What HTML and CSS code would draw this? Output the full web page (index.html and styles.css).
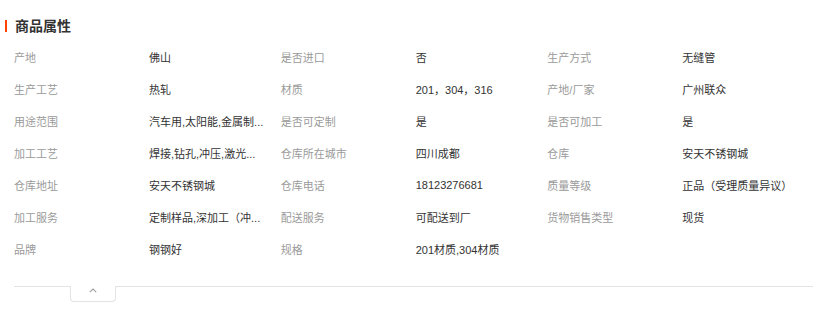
FILE: index.html
```html
<!DOCTYPE html>
<html lang="zh-CN">
<head>
<meta charset="utf-8">
<title>商品属性</title>
<link rel="stylesheet" href="styles.css">
</head>
<body>
<section class="attrs">
  <h3 class="attrs-title">商品属性</h3>
  <div class="attrs-grid">
    <div class="attr"><span class="attr-label">产地</span><span class="attr-value">佛山</span></div>
    <div class="attr"><span class="attr-label">是否进口</span><span class="attr-value">否</span></div>
    <div class="attr"><span class="attr-label">生产方式</span><span class="attr-value">无缝管</span></div>
    <div class="attr"><span class="attr-label">生产工艺</span><span class="attr-value">热轧</span></div>
    <div class="attr"><span class="attr-label">材质</span><span class="attr-value">201，304，316</span></div>
    <div class="attr"><span class="attr-label">产地/厂家</span><span class="attr-value">广州联众</span></div>
    <div class="attr"><span class="attr-label">用途范围</span><span class="attr-value">汽车用,太阳能,金属制...</span></div>
    <div class="attr"><span class="attr-label">是否可定制</span><span class="attr-value">是</span></div>
    <div class="attr"><span class="attr-label">是否可加工</span><span class="attr-value">是</span></div>
    <div class="attr"><span class="attr-label">加工工艺</span><span class="attr-value">焊接,钻孔,冲压,激光...</span></div>
    <div class="attr"><span class="attr-label">仓库所在城市</span><span class="attr-value">四川成都</span></div>
    <div class="attr"><span class="attr-label">仓库</span><span class="attr-value">安天不锈钢城</span></div>
    <div class="attr"><span class="attr-label">仓库地址</span><span class="attr-value">安天不锈钢城</span></div>
    <div class="attr"><span class="attr-label">仓库电话</span><span class="attr-value">18123276681</span></div>
    <div class="attr"><span class="attr-label">质量等级</span><span class="attr-value">正品（受理质量异议）</span></div>
    <div class="attr"><span class="attr-label">加工服务</span><span class="attr-value">定制样品,深加工（冲...</span></div>
    <div class="attr"><span class="attr-label">配送服务</span><span class="attr-value">可配送到厂</span></div>
    <div class="attr"><span class="attr-label">货物销售类型</span><span class="attr-value">现货</span></div>
    <div class="attr"><span class="attr-label">品牌</span><span class="attr-value">钢钢好</span></div>
    <div class="attr"><span class="attr-label">规格</span><span class="attr-value">201材质,304材质</span></div>
  </div>
  <div class="attrs-foot">
    <button class="attrs-toggle" type="button" aria-label="收起">
      <svg class="chevron" width="8" height="5" viewBox="0 0 8 5"><polyline points="0.8,4.2 4,1 7.2,4.2" fill="none" stroke="#a0a0a0" stroke-width="1.1"/></svg>
    </button>
  </div>
</section>
</body>
</html>
```
FILE: styles.css
```css
html, body {
  margin: 0;
  padding: 0;
  background: #fff;
}

body {
  font-family: "Liberation Sans", "Noto Sans CJK SC", sans-serif;
  color: #333;
}

.attrs {
  width: 819px;
  padding-top: 16px;
}

.attrs-title {
  display: flex;
  align-items: center;
  gap: 8px;
  margin: 0;
  padding-left: 5px;
  height: 20px;
  line-height: 20px;
  font-size: 14px;
  font-weight: bold;
  color: #333;
}

.attrs-title::before {
  content: "";
  width: 2px;
  height: 12px;
  background: #ff4400;
}

.attrs-grid {
  display: grid;
  grid-template-columns: repeat(3, 1fr);
  width: 800px;
  margin: 5px 0 0 14px;
}

.attr {
  display: flex;
  align-items: center;
  height: 32px;
  font-size: 11px;
}

.attr-label {
  flex: 0 0 135px;
  color: #9a9a9a;
}

.attr-value {
  max-width: 128px;
  color: #333;
  white-space: nowrap;
  overflow: hidden;
  text-overflow: ellipsis;
}

.attrs-foot {
  width: 799px;
  margin: 21px 0 0 14px;
  border-top: 1px solid #e3e3e3;
}

.attrs-toggle {
  display: flex;
  align-items: flex-start;
  justify-content: center;
  width: 46px;
  height: 16px;
  margin: -1px 0 0 56px;
  padding: 2px 0 0;
  background: #fff;
  border: 1px solid #e3e3e3;
  border-top: none;
  border-radius: 0 0 4px 4px;
  cursor: pointer;
}

.chevron {
  display: block;
}
```
